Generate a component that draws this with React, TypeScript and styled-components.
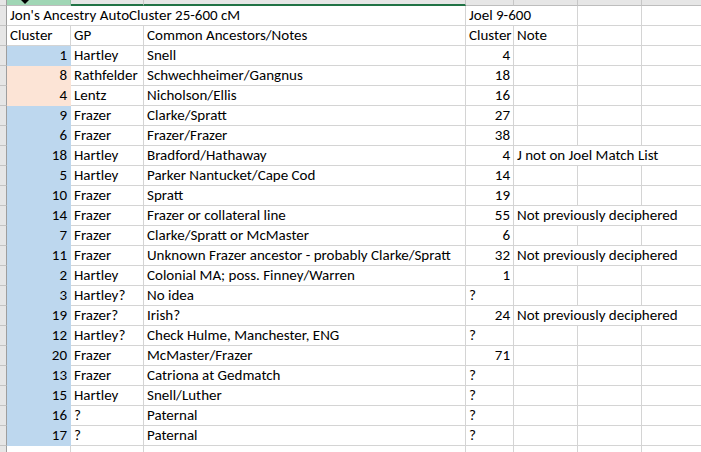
import React from "react";
import styled, { createGlobalStyle } from "styled-components";

const GlobalStyle = createGlobalStyle`
  html, body {
    margin: 0;
    padding: 0;
    background: #ffffff;
    overflow: hidden;
  }
  body {
    font-family: "Carlito", "Lato", "Liberation Sans", sans-serif;
  }
`;

type Row = {
  id: string;
  gp: string;
  notes: string;
  joel: string;
  note?: string;
  fill?: string;
};

const BLUE = "#bdd7ee";
const PEACH = "#fce4d6";

const rows: Row[] = [
  { id: "1", gp: "Hartley", notes: "Snell", joel: "4", fill: BLUE },
  { id: "8", gp: "Rathfelder", notes: "Schwechheimer/Gangnus", joel: "18", fill: PEACH },
  { id: "4", gp: "Lentz", notes: "Nicholson/Ellis", joel: "16", fill: PEACH },
  { id: "9", gp: "Frazer", notes: "Clarke/Spratt", joel: "27", fill: BLUE },
  { id: "6", gp: "Frazer", notes: "Frazer/Frazer", joel: "38", fill: BLUE },
  { id: "18", gp: "Hartley", notes: "Bradford/Hathaway", joel: "4", note: "J not on Joel Match List", fill: BLUE },
  { id: "5", gp: "Hartley", notes: "Parker Nantucket/Cape Cod", joel: "14", fill: BLUE },
  { id: "10", gp: "Frazer", notes: "Spratt", joel: "19", fill: BLUE },
  { id: "14", gp: "Frazer", notes: "Frazer or collateral line", joel: "55", note: "Not previously deciphered", fill: BLUE },
  { id: "7", gp: "Frazer", notes: "Clarke/Spratt or McMaster", joel: "6", fill: BLUE },
  { id: "11", gp: "Frazer", notes: "Unknown Frazer ancestor - probably Clarke/Spratt", joel: "32", note: "Not previously deciphered", fill: BLUE },
  { id: "2", gp: "Hartley", notes: "Colonial MA; poss. Finney/Warren", joel: "1", fill: BLUE },
  { id: "3", gp: "Hartley?", notes: "No idea", joel: "?", fill: BLUE },
  { id: "19", gp: "Frazer?", notes: "Irish?", joel: "24", note: "Not previously deciphered", fill: BLUE },
  { id: "12", gp: "Hartley?", notes: "Check Hulme, Manchester, ENG", joel: "?", fill: BLUE },
  { id: "20", gp: "Frazer", notes: "McMaster/Frazer", joel: "71", fill: BLUE },
  { id: "13", gp: "Frazer", notes: "Catriona at Gedmatch", joel: "?", fill: BLUE },
  { id: "15", gp: "Hartley", notes: "Snell/Luther", joel: "?", fill: BLUE },
  { id: "16", gp: "?", notes: "Paternal", joel: "?", fill: BLUE },
  { id: "17", gp: "?", notes: "Paternal", joel: "?", fill: BLUE },
];

const Sheet = styled.div`
  display: grid;
  grid-template-columns: 7px 64px 73px 322px 48px 64px 64px 64px;
  grid-template-rows: 6px;
  grid-auto-rows: 20px;
  width: 701px;
  height: 452px;
  overflow: hidden;
`;

const Corner = styled.div`
  background: #e6e6e6;
  border-right: 1px solid #9e9e9e;
  border-bottom: 1px solid #bdbdbd;
  box-sizing: border-box;
`;

const ColHead = styled.div<{ $selected?: boolean; $underline?: boolean }>`
  position: relative;
  box-sizing: border-box;
  background: ${(p) => (p.$selected ? "#a0d6b5" : "#e6e6e6")};
  border-right: 1px solid ${(p) => (p.$selected ? "#8fc4a4" : "#c6c6c6")};
  border-bottom: ${(p) => (p.$underline ? "2px solid #217346" : "1px solid #bdbdbd")};
`;

const Cursor = styled.span`
  position: absolute;
  left: 14px;
  top: 0;
  width: 0;
  height: 0;
  border-left: 4px solid transparent;
  border-right: 4px solid transparent;
  border-top: 4px solid #000000;
`;

const RowHead = styled.div`
  background: #e6e6e6;
  border-right: 1px solid #9e9e9e;
  border-bottom: 1px solid #c4c4c4;
  box-sizing: border-box;
`;

const Cell = styled.div<{ $align?: "left" | "right"; $fill?: string; $span?: number }>`
  box-sizing: border-box;
  display: flex;
  align-items: flex-end;
  justify-content: ${(p) => (p.$align === "right" ? "flex-end" : "flex-start")};
  grid-column: ${(p) => (p.$span ? `span ${p.$span}` : "auto")};
  padding: 0 3px 1px 3px;
  background: ${(p) => p.$fill ?? "#ffffff"};
  border-right: 1px solid ${(p) => p.$fill ?? "#d4d4d4"};
  border-bottom: 1px solid ${(p) => p.$fill ?? "#d4d4d4"};
  color: #000000;
  font-size: 15px;
  line-height: 18px;
  white-space: nowrap;
  overflow: visible;
`;

const Empty = ({ n }: { n: number }) => (
  <>
    {Array.from({ length: n }).map((_, i) => (
      <Cell key={i} />
    ))}
  </>
);

export default function App() {
  return (
    <>
      <GlobalStyle />
      <Sheet>
        <Corner />
        <ColHead $selected>
          <Cursor />
        </ColHead>
        <ColHead $underline />
        <ColHead $underline />
        <ColHead />
        <ColHead />
        <ColHead />
        <ColHead />

        <RowHead />
        <Cell $span={3}>Jon's Ancestry AutoCluster 25-600 cM</Cell>
        <Cell $span={2}>Joel 9-600</Cell>
        <Empty n={2} />

        <RowHead />
        <Cell>Cluster</Cell>
        <Cell>GP</Cell>
        <Cell>Common Ancestors/Notes</Cell>
        <Cell>Cluster</Cell>
        <Cell>Note</Cell>
        <Empty n={2} />

        {rows.map((r) => (
          <React.Fragment key={r.id}>
            <RowHead />
            <Cell $align="right" $fill={r.fill}>
              {r.id}
            </Cell>
            <Cell>{r.gp}</Cell>
            <Cell>{r.notes}</Cell>
            <Cell $align={r.joel === "?" ? "left" : "right"}>{r.joel}</Cell>
            {r.note ? <Cell $span={3}>{r.note}</Cell> : <Empty n={3} />}
          </React.Fragment>
        ))}

        <RowHead />
        <Empty n={7} />
      </Sheet>
    </>
  );
}
